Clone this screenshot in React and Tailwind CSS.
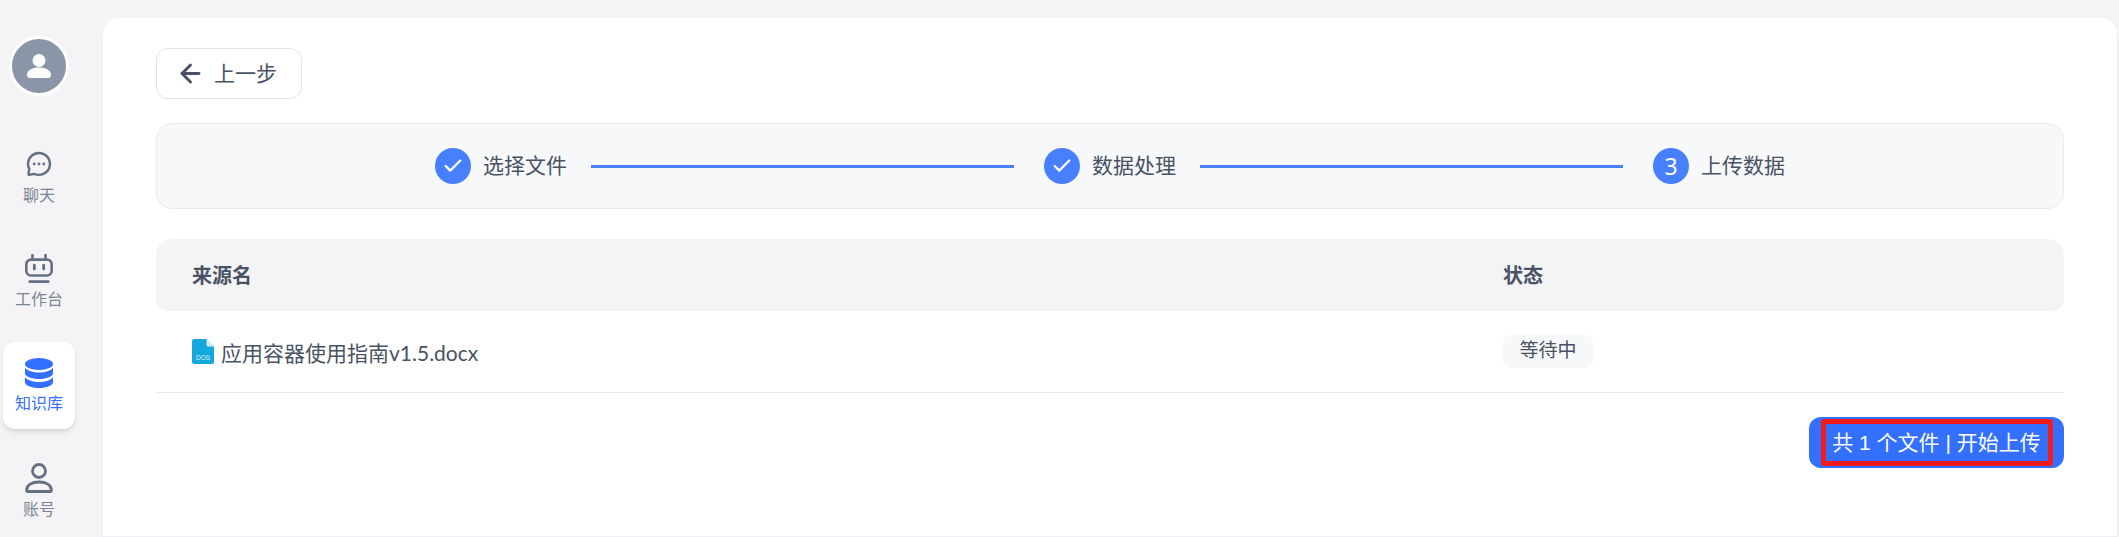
import React from 'react'
import { ArrowLeft, Check } from 'lucide-react'

const ChatIcon = () => (
  <svg width="26" height="26" viewBox="0 0 26 26" fill="none">
    <path d="M13 2C7 2 2 6.800 2 12.800c0 2 .5 3.600 1.300 5.100L2.400 23c-.1.5.2.8.7.7l5-.8c1.500.7 3.100 1 4.900 1 6 0 11-4.900 11-11S19 2 13 2Z" stroke="#667085" strokeWidth="2.400" />
    <circle cx="8.200" cy="13" r="1.400" fill="#667085" />
    <circle cx="13" cy="13" r="1.400" fill="#667085" />
    <circle cx="17.800" cy="13" r="1.400" fill="#667085" />
  </svg>
)

const BotIcon = () => (
  <svg width="28" height="30" viewBox="0 0 30 32" fill="none">
    <path d="M8 1v5M22 1v5" stroke="#667085" strokeWidth="2.800" strokeLinecap="round" />
    <rect x="1.400" y="6" width="27.200" height="17" rx="5" stroke="#667085" strokeWidth="2.800" />
    <path d="M10 12v4M20 12v4" stroke="#667085" strokeWidth="3" strokeLinecap="round" />
    <path d="M5 29.500h20" stroke="#667085" strokeWidth="2.800" strokeLinecap="round" />
  </svg>
)

const DbIcon = () => (
  <svg width="28" height="30" viewBox="0 0 28 30" fill="#3370ff">
    <ellipse cx="14" cy="6" rx="14" ry="6" />
    <path d="M0 9.500C2 13 8 14.500 14 14.500S26 13 28 9.500V15c0 3.500-6.300 6-14 6S0 18.500 0 15V9.500Z" />
    <path d="M0 19C2 22.500 8 24 14 24S26 22.500 28 19v5c0 3.500-6.300 6-14 6S0 27.500 0 24v-5Z" />
  </svg>
)

const UserIcon = () => (
  <svg width="28" height="30" viewBox="0 0 28 30" fill="none">
    <circle cx="14" cy="8" r="6.500" stroke="#667085" strokeWidth="2.800" />
    <path d="M1.500 27.500c0-5.500 5.500-8.500 12.500-8.500s12.500 3 12.500 8.500c0 .6-.4 1-1 1h-23c-.6 0-1-.4-1-1Z" stroke="#667085" strokeWidth="2.800" />
  </svg>
)

const DocIcon = () => (
  <svg width="22" height="25" viewBox="0 0 22 25">
    <path d="M2 0h12.500L22 7.500V23a2 2 0 0 1-2 2H2a2 2 0 0 1-2-2V2a2 2 0 0 1 2-2Z" fill="#14a9de" />
    <path d="M14.500 0 22 7.500h-6a1.500 1.500 0 0 1-1.500-1.500V0Z" fill="#d3eefa" />
    <text x="11" y="20.500" textAnchor="middle" fontSize="6.500" fill="#d9f2fc" fontFamily="'Liberation Sans', sans-serif">DOS</text>
  </svg>
)

const navItems = [
  { label: '聊天', icon: <ChatIcon />, top: 'pt-[17px]', gap: 'mt-[2px]' },
  { label: '工作台', icon: <BotIcon />, top: 'pt-[16px]', gap: 'mt-[3px]' },
  { label: '知识库', icon: <DbIcon />, top: 'pt-[16px]', gap: 'mt-[3px]', active: true },
  { label: '账号', icon: <UserIcon />, top: 'pt-[17px]', gap: 'mt-[4px]' },
]

const Step = ({ label, num }) => (
  <div className="flex items-center gap-3 shrink-0">
    <div className="w-9 h-9 rounded-full bg-[#487fff] text-white flex items-center justify-center text-[23px] font-['Noto_Sans',sans-serif]">
      {num ? num : <Check size={22} strokeWidth={2.5} />}
    </div>
    <span className="text-[21px] text-[#485264]">{label}</span>
  </div>
)

const App = () => {
  return (
    <div className="h-[537px] overflow-hidden flex bg-[#f4f4f7] font-['Liberation_Sans','Noto_Sans_CJK_SC',sans-serif]">
      <div className="w-[102px] shrink-0 pt-9 flex flex-col">
        <div className="ml-[9px] w-[60px] h-[60px] rounded-full bg-[#8a95a7] border-[3px] border-white flex items-center justify-center mb-[38px]">
          <svg width="26" height="26" viewBox="0 0 26 26" fill="white">
            <circle cx="13" cy="7.500" r="6.500" />
            <path d="M1 22c0-5 5.500-7.500 12-7.500S25 17 25 22c0 1.500-1 3-3 3H4c-2 0-3-1.500-3-3Z" />
          </svg>
        </div>
        <div className="flex flex-col gap-[17px] ml-[3px] w-[72px]">
          {navItems.map((item) => (
            <div key={item.label} className={`h-[87px] rounded-xl flex flex-col items-center ${item.top} ${item.active ? 'bg-white shadow-md' : ''}`}>
              <div className="h-[32px] flex items-start justify-center">{item.icon}</div>
              <span className={`text-[16px] leading-[22px] ${item.gap} ${item.active ? 'text-[#3370ff]' : 'text-[#7b8494]'}`}>{item.label}</span>
            </div>
          ))}
        </div>
      </div>
      <div className="flex-1 mt-[17px] mr-px bg-white rounded-t-2xl border border-[#eff0f3] px-[53px] pt-[30px]">
        <button className="w-[146px] h-[51px] rounded-xl border border-[#dfe2ea] bg-white flex items-center pl-[19px] gap-[9px] text-[21px] text-[#485264]">
          <ArrowLeft size={29} strokeWidth={2.4} />
          上一步
        </button>
        <div className="mt-6 h-[86px] rounded-2xl border border-[#e8ebf0] bg-[#f7f8fa] flex items-center px-[278px]">
          <Step label="选择文件" />
          <div className="flex-1 h-[3px] bg-[#487fff] ml-6 mr-[30px]" />
          <Step label="数据处理" />
          <div className="flex-1 h-[3px] bg-[#487fff] ml-6 mr-[30px]" />
          <Step label="上传数据" num="3" />
        </div>
        <div className="mt-[30px] h-[72px] rounded-t-2xl rounded-b-xl bg-[#f4f4f7] flex items-center text-[20px] font-bold text-[#485264]">
          <div className="w-[1347px] pl-9 pt-[2px]">来源名</div>
          <div className="pt-[2px]">状态</div>
        </div>
        <div className="h-[82px] border-b border-[#e8ebf0] flex items-center text-[21px] text-[#485264]">
          <div className="w-[1347px] pl-9 flex items-center gap-[7px]">
            <DocIcon />
            <span className="pt-[3px] font-['Lato','Noto_Sans_CJK_SC',sans-serif]">应用容器使用指南v1.5.docx</span>
          </div>
          <div className="h-[33px] w-[90px] rounded-lg bg-[#f7f8fa] flex items-center justify-center text-[19px]">等待中</div>
        </div>
        <div className="flex justify-end mt-6">
          <div className="w-[255px] h-[51px] rounded-xl bg-[#3370ff] flex items-center justify-center">
            <div className="w-[232px] h-[47px] rounded-[3px] border-[5px] border-[#f01c1c] flex items-center justify-center text-[21px] text-white whitespace-nowrap">
              共 1 个文件 | 开始上传
            </div>
          </div>
        </div>
      </div>
    </div>
  )
}

export default App
